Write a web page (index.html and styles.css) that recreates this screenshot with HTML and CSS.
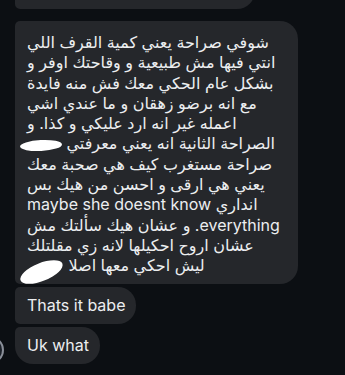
FILE: index.html
```html
<!DOCTYPE html>
<html lang="ar">
<head>
    <meta charset="UTF-8">
    <meta name="viewport" content="width=device-width, initial-scale=1.0">
    <title>Chat</title>
    <link rel="stylesheet" href="styles.css">
</head>
<body>

    <!-- Conversation -->
    <div class="thread">
        <div class="row">
            <div class="slot"></div>
            <div class="bubble prev">&nbsp;</div>
        </div>

        <div class="row">
            <div class="slot"></div>
            <div class="bubble long">
                <div class="ln">شوفي صراحة يعني كمية القرف اللي</div>
                <div class="ln">انتي فيها مش طبيعية و وقاحتك اوفر و</div>
                <div class="ln">بشكل عام الحكي معك فش منه فايدة</div>
                <div class="ln">مع انه برضو زهقان و ما عندي اشي</div>
                <div class="ln">اعمله غير انه ارد عليكي و كذا. و</div>
                <div class="ln">الصراحة الثانية انه يعني معرفتي <span class="blot one"></span></div>
                <div class="ln">صراحة مستغرب كيف هي صحبة معك</div>
                <div class="ln">يعني هي ارقى و احسن من هيك بس</div>
                <div class="ln">انداري maybe she doesnt know</div>
                <div class="ln">everything. و عشان هيك سألتك مش</div>
                <div class="ln">عشان اروح احكيلها لانه زي مقلتلك</div>
                <div class="ln">ليش احكي معها اصلا <span class="blot two"></span></div>
            </div>
        </div>

        <div class="row">
            <div class="slot"></div>
            <div class="bubble mid">Thats it babe</div>
        </div>

        <div class="row">
            <div class="slot"><div class="avatar"></div></div>
            <div class="bubble last">Uk what</div>
        </div>
    </div>

</body>
</html>
```

FILE: styles.css
```css
html, body { margin: 0; height: 375px; overflow: hidden; }
body { background: #0c0f13; color: #eceef0; font-family: "Inter", "DejaVu Sans", sans-serif; font-size: 16px; }

/* Thread */
.thread { margin-left: -24px; display: flex; flex-direction: column; gap: 3px; }
.row { display: flex; align-items: flex-end; gap: 11px; }
.slot { width: 28px; flex-shrink: 0; }

.avatar { width: 24px; height: 24px; border-radius: 50%; background: #1c2129; border: 2px solid #8a8f99; }

/* Bubbles */
.bubble { background: #25272b; border-radius: 5px 18px 18px 5px; padding: 8px 11px 8px 12px; line-height: 21px; }
.prev { width: 217px; height: 24px; margin-top: -31px; margin-bottom: 9px; }
.long { width: 259px; padding: 11px 12px 8px 12px; line-height: 20.3px; }
.last { border-bottom-left-radius: 18px; }

.ln { direction: rtl; text-align: left; white-space: nowrap; }

/* Scribbled-out names */
.blot { display: inline-block; background: #ffffff; border-radius: 50%; vertical-align: middle; }
.blot.one { width: 42px; height: 11px; margin-left: -7px; transform: rotate(-3deg); }
.blot.two { width: 45px; height: 18px; margin-left: -8px; transform: translateY(5px) rotate(-22deg); }
```
